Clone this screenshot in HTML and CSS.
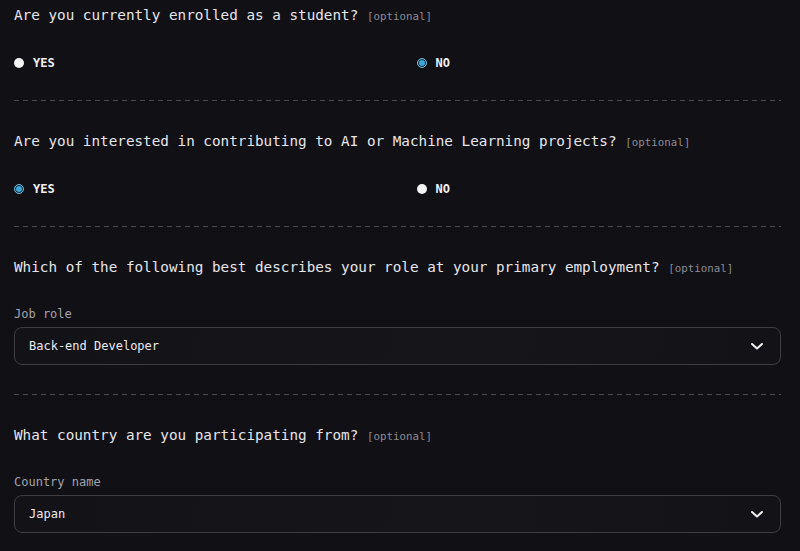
FILE: index.html
```html
<!DOCTYPE html>
<html lang="en">
<head>
<meta charset="utf-8">
<title>Survey</title>
<link rel="stylesheet" href="styles.css">
</head>
<body>
<main class="form">
  <section class="section section-first">
    <p class="question">Are you currently enrolled as a student? <span class="optional">[optional]</span></p>
    <div class="options">
      <label class="option"><span class="radio"></span><span class="option-text">YES</span></label>
      <label class="option"><span class="radio radio-checked"></span><span class="option-text">NO</span></label>
    </div>
  </section>
  <div class="divider"></div>
  <section class="section">
    <p class="question">Are you interested in contributing to AI or Machine Learning projects? <span class="optional">[optional]</span></p>
    <div class="options">
      <label class="option"><span class="radio radio-checked"></span><span class="option-text">YES</span></label>
      <label class="option"><span class="radio"></span><span class="option-text">NO</span></label>
    </div>
  </section>
  <div class="divider"></div>
  <section class="section section-field">
    <p class="question">Which of the following best describes your role at your primary employment? <span class="optional">[optional]</span></p>
    <div class="field">
      <span class="field-label">Job role</span>
      <div class="select">
        <span class="select-value">Back-end Developer</span>
        <svg class="chevron" width="12" height="7" viewBox="0 0 12 7"><path d="M1 1 L6 5.5 L11 1" fill="none" stroke="#f2f2f2" stroke-width="2" stroke-linecap="round" stroke-linejoin="round"/></svg>
      </div>
    </div>
  </section>
  <div class="divider"></div>
  <section class="section section-field">
    <p class="question">What country are you participating from? <span class="optional">[optional]</span></p>
    <div class="field">
      <span class="field-label">Country name</span>
      <div class="select">
        <span class="select-value">Japan</span>
        <svg class="chevron" width="12" height="7" viewBox="0 0 12 7"><path d="M1 1 L6 5.5 L11 1" fill="none" stroke="#f2f2f2" stroke-width="2" stroke-linecap="round" stroke-linejoin="round"/></svg>
      </div>
    </div>
  </section>
</main>
</body>
</html>
```

FILE: styles.css
```css
html, body {
  margin: 0;
  padding: 0;
  background: #111015;
}

body {
  font-family: "DejaVu Sans Mono", "Liberation Mono", monospace;
  color: #e4e4e7;
  overflow: hidden;
}

.form {
  padding: 0 19px 0 14px;
}

.section {
  display: flex;
  flex-direction: column;
  gap: 28px;
  padding: 30px 0 27px;
}

.section-first {
  padding-top: 5px;
}

.section-field {
  gap: 29px;
  padding-bottom: 29px;
}

.question {
  margin: 0;
  height: 20px;
  font-size: 14.3px;
  line-height: 20px;
  color: #e6e6ea;
  white-space: nowrap;
}

.optional {
  font-size: 10.8px;
  line-height: 1;
  color: #8d8c94;
}

.options {
  display: grid;
  grid-template-columns: 1fr 1fr;
  column-gap: 38px;
  height: 20px;
}

.option {
  display: flex;
  align-items: center;
  gap: 9px;
}

.radio {
  width: 10px;
  height: 10px;
  border-radius: 50%;
  background: #f4f4f4;
  box-sizing: border-box;
}

.radio-checked {
  background: #3fa6da;
  border: 1px solid #6fb4d6;
  box-shadow: inset 0 0 0 1px #16262f;
}

.option-text {
  font-size: 12px;
  font-weight: bold;
  color: #f0f0f2;
  line-height: 20px;
}

.divider {
  height: 1px;
  background: repeating-linear-gradient(to right, #4a494f 0 5px, transparent 5px 9px);
}

.field {
  display: flex;
  flex-direction: column;
  gap: 5px;
}

.field-label {
  font-size: 12px;
  line-height: 16px;
  color: #a3a3aa;
}

.select {
  box-sizing: border-box;
  height: 38px;
  display: flex;
  align-items: center;
  justify-content: space-between;
  padding: 0 17px 0 14px;
  border: 1.5px solid #3e3d43;
  border-radius: 8px;
  background: linear-gradient(100deg, #131217, #16151a 60%, #131217);
}

.select-value {
  font-size: 12px;
  color: #ececef;
}

.chevron {
  display: block;
}
```
